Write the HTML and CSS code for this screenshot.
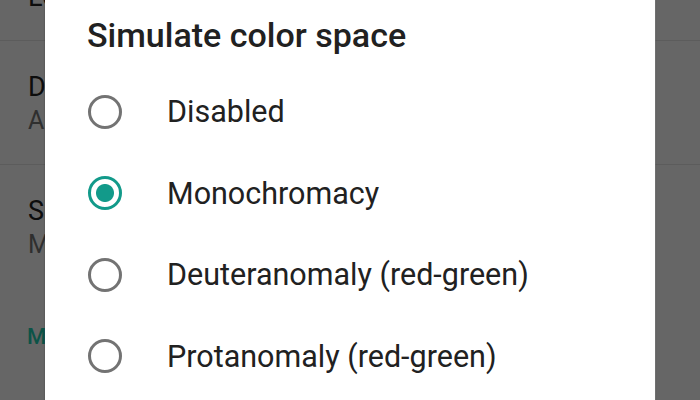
FILE: index.html
```html
<!DOCTYPE html>
<html>
<head>
<meta charset="utf-8">
<link rel="stylesheet" href="styles.css">
</head>
<body>
<div class="screen">
  <div class="settings">
    <div class="pref pref-top">
      <div class="pref-title">Long text item</div>
    </div>
    <div class="pref">
      <div class="pref-title">Disable HW overlays</div>
      <div class="pref-summary">Always use GPU for screen compositing</div>
    </div>
    <div class="pref pref-last">
      <div class="pref-title">Simulate color space</div>
      <div class="pref-summary">Monochromacy</div>
    </div>
    <div class="category">Media</div>
  </div>
  <div class="scrim"></div>
  <div class="dialog">
    <h1 class="dialog-title">Simulate color space</h1>
    <ul class="options">
      <li class="option"><span class="radio"></span><span class="label">Disabled</span></li>
      <li class="option"><span class="radio checked"></span><span class="label">Monochromacy</span></li>
      <li class="option"><span class="radio"></span><span class="label">Deuteranomaly (red-green)</span></li>
      <li class="option"><span class="radio"></span><span class="label">Protanomaly (red-green)</span></li>
    </ul>
  </div>
</div>
</body>
</html>
```
FILE: styles.css
```css
html, body {
  margin: 0;
  padding: 0;
}
body {
  width: 700px;
  height: 400px;
  overflow: hidden;
  font-family: Roboto, "Noto Sans", sans-serif;
  background: #fff;
}
.screen {
  position: relative;
  width: 700px;
  height: 400px;
  overflow: hidden;
}
.settings {
  margin-top: -84px;
  background: #fff;
}
.pref {
  height: 124px;
  border-bottom: 1px solid #e6e6e6;
  padding: 29px 0 0 28px;
  box-sizing: border-box;
}
.pref-top {
  height: 125px;
  padding-top: 64px;
}
.pref-last {
  border-bottom: none;
}
.pref-title,
.pref-summary {
  width: 17px;
  overflow: hidden;
  white-space: nowrap;
  line-height: 34px;
}
.pref-title {
  font-size: 27px;
  color: #212121;
}
.pref-summary {
  font-size: 25px;
  color: #757575;
}
.category {
  width: 18px;
  overflow: hidden;
  white-space: nowrap;
  padding: 35px 0 0 27px;
  font-size: 22px;
  font-weight: 500;
  color: #1fd0b2;
}
.scrim {
  position: absolute;
  inset: 0;
  background: rgba(0, 0, 0, 0.6);
}
.dialog {
  position: absolute;
  left: 45px;
  top: -20px;
  width: 610px;
  height: 460px;
  background: #fff;
  box-shadow: 0 0 2px rgba(0, 0, 0, 0.3), 1px 0 0 rgba(255,255,255,0.15);
}
.dialog-title {
  margin: 0;
  padding: 35px 0 0 42px;
  height: 56px;
  font-size: 34px;
  font-weight: 500;
  line-height: 40px;
  color: #212121;
  white-space: nowrap;
}
.options {
  list-style: none;
  margin: 0;
  padding: 0;
}
.option {
  display: flex;
  align-items: center;
  height: 81.5px;
}
.radio {
  width: 28px;
  height: 28px;
  margin-left: 43px;
  border: 3.5px solid #737373;
  border-radius: 50%;
  box-sizing: content-box;
  flex: none;
}
.radio.checked {
  border-color: #129a8a;
  background: radial-gradient(circle, #129a8a 0 8.5px, transparent 9.5px);
}
.label {
  margin-left: 45px;
  font-size: 30.5px;
  color: #212121;
  white-space: nowrap;
}
```
